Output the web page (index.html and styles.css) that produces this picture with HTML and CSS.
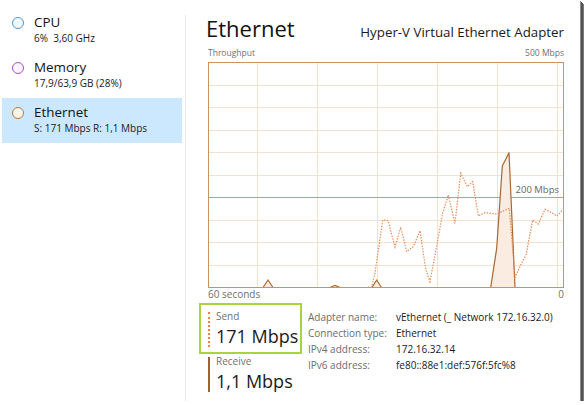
FILE: index.html
```html
<!DOCTYPE html>
<html lang="en">
<head>
<meta charset="utf-8">
<title>Task Manager - Ethernet</title>
<link rel="stylesheet" href="styles.css">
</head>
<body>
<div class="window">
  <aside class="sidebar">
    <div class="item">
      <span class="dot cpu"></span>
      <div class="txt"><div class="name">CPU</div><div class="sub">6%&nbsp; 3,60 GHz</div></div>
    </div>
    <div class="item">
      <span class="dot mem"></span>
      <div class="txt"><div class="name">Memory</div><div class="sub">17,9/63,9 GB (28%)</div></div>
    </div>
    <div class="item selected">
      <span class="dot eth"></span>
      <div class="txt"><div class="name">Ethernet</div><div class="sub">S: 171 Mbps R: 1,1 Mbps</div></div>
    </div>
  </aside>
  <div class="sep"></div>
  <main class="main">
    <div class="head">
      <h1>Ethernet</h1>
      <div class="adapter">Hyper-V Virtual Ethernet Adapter</div>
    </div>
    <div class="axis top"><span>Throughput</span><span>500 Mbps</span></div>
    <svg class="chart" viewBox="0 0 356 226" width="356" height="226">
      <rect x="0.5" y="0.5" width="355" height="225" fill="#fff"/>
      <g stroke="#f4e2cf" stroke-width="1">
        <line x1="0" y1="23.5" x2="356" y2="23.5"/>
        <line x1="0" y1="45.5" x2="356" y2="45.5"/>
        <line x1="0" y1="68.5" x2="356" y2="68.5"/>
        <line x1="0" y1="90.5" x2="356" y2="90.5"/>
        <line x1="0" y1="113.5" x2="356" y2="113.5"/>
        <line x1="0" y1="158.5" x2="356" y2="158.5"/>
        <line x1="0" y1="180.5" x2="356" y2="180.5"/>
        <line x1="0" y1="203.5" x2="356" y2="203.5"/>
        <line x1="49.5" y1="0" x2="49.5" y2="226"/>
        <line x1="109.5" y1="0" x2="109.5" y2="226"/>
        <line x1="169.5" y1="0" x2="169.5" y2="226"/>
        <line x1="229.5" y1="0" x2="229.5" y2="226"/>
        <line x1="289.5" y1="0" x2="289.5" y2="226"/>
        <line x1="349.5" y1="0" x2="349.5" y2="226"/>
      </g>
      <line x1="0" y1="135.5" x2="356" y2="135.5" stroke="#cc9d6d" stroke-width="1"/>
      <text x="351" y="130.5" text-anchor="end" class="chart-label">200 Mbps</text>
      <polygon points="282.7,225.5 288.7,186.3 294.3,104 301,90.7 307,225.5" fill="#faece0" stroke="#a8672e" stroke-width="1.2" stroke-linejoin="round"/>
      <polyline points="55,225.5 60,218 65,225.5" fill="#faece0" stroke="#a8672e" stroke-width="1.2"/>
      <polyline points="122,225.5 127,223.5 132,225.5" fill="none" stroke="#a8672e" stroke-width="1.2"/>
      <polyline points="164,225.5 168.7,218 173.5,225.5" fill="#faece0" stroke="#a8672e" stroke-width="1.2"/>
      <polyline points="160,225 163.7,225 167,211 174.7,158 180,158.7 187,185 192.7,165.3 198.7,189.7 205.3,184.7 212,168.7 217.7,207 222,219.7 229.3,180.7 234.7,151 240.3,133 247,161.3 252.7,111.3 259.3,124.7 264.7,119.7 270.3,154 277,150.7 288.7,152 301.3,146.3 307,215.3 312.7,203 318,193 324.7,158 330.3,162 337,147.3 343.7,150.7 348.7,154 353.7,149 355.5,148" fill="none" stroke="#e4884e" stroke-width="1.2" stroke-dasharray="1.4 1.4"/>
      <rect x="0.5" y="0.5" width="355" height="225" fill="none" stroke="#c8955f" stroke-width="1"/>
    </svg>
    <div class="axis bottom"><span>60 seconds</span><span>0</span></div>
    <div class="stats">
      <div class="meters">
        <div class="meter selected">
          <span class="bar dotted"></span>
          <div class="mtext"><div class="label">Send</div><div class="value">171 Mbps</div></div>
        </div>
        <div class="meter recv">
          <span class="bar solid"></span>
          <div class="mtext"><div class="label">Receive</div><div class="value">1,1 Mbps</div></div>
        </div>
      </div>
      <dl class="details">
        <dt>Adapter name:</dt><dd>vEthernet (_ Network 172.16.32.0)</dd>
        <dt>Connection type:</dt><dd>Ethernet</dd>
        <dt>IPv4 address:</dt><dd>172.16.32.14</dd>
        <dt>IPv6 address:</dt><dd>fe80::88e1:def:576f:5fc%8</dd>
      </dl>
    </div>
  </main>
</div>
</body>
</html>
```
FILE: styles.css
```css
html, body {
  margin: 0;
  padding: 0;
  background: #fff;
}
body {
  font-family: "Open Sans", "Noto Sans", sans-serif;
  color: #1a1a1a;
}
.window {
  width: 580px;
  height: 401px;
  display: flex;
  background: #fff;
  overflow: hidden;
  box-shadow: 1px 1px 0 #8e8e8e, 2px 2px 0 #505050, 3px 3px 0 #555, 4px 4px 0 #7a7a7a;
}
.sidebar {
  width: 185px;
  flex: none;
  padding-top: 8px;
  box-sizing: border-box;
}
.item {
  display: flex;
  align-items: flex-start;
  margin-left: 2px;
  width: 180px;
  height: 45px;
  box-sizing: border-box;
  padding: 4.5px 0 0 10px;
}
.item.selected {
  background: #cce8ff;
}
.dot {
  width: 12px;
  height: 12px;
  border-radius: 50%;
  border: 1.3px solid;
  box-sizing: border-box;
  margin-top: 4.5px;
  flex: none;
}
.dot.cpu { border-color: #4f97d2; background: #f3f8fd; }
.dot.mem { border-color: #ab4fc6; background: #fbf5fd; }
.dot.eth { border-color: #b9773a; background: #fdf4ec; }
.txt {
  margin-left: 10px;
}
.name {
  font-size: 13.4px;
  line-height: 18px;
  color: #111;
}
.sub {
  font-size: 10px;
  line-height: 14px;
  color: #1a1a1a;
}
.sep {
  width: 1px;
  flex: none;
  margin-top: 15px;
  background: #e6e6e6;
}
.main {
  flex: 1;
  min-width: 0;
  padding: 13px 16px 0 20px;
}
.head {
  display: flex;
  justify-content: space-between;
  align-items: baseline;
  height: 30px;
}
.head h1 {
  margin: 0;
  font-size: 22px;
  line-height: 30px;
  font-weight: normal;
  color: #111;
}
.adapter {
  font-size: 13.3px;
  line-height: 30px;
  color: #1a1a1a;
}
.axis {
  display: flex;
  justify-content: space-between;
  margin-left: 2px;
  color: #707070;
}
.axis.top {
  margin-top: 4px;
  font-size: 8.5px;
  line-height: 12px;
}
.axis.bottom {
  font-size: 10px;
  line-height: 13px;
}
.chart {
  display: block;
  margin: 3px 0 0 2px;
  width: 356px;
  height: 226px;
}
.chart-label {
  font-family: "Open Sans", "Noto Sans", sans-serif;
  font-size: 9.5px;
  fill: #666;
}
.stats {
  display: flex;
  align-items: flex-start;
  margin-top: 2px;
}
.meters {
  width: 103px;
  margin-left: -7px;
  flex: none;
}
.meter {
  display: flex;
  height: 51px;
  box-sizing: border-box;
  border: 2px solid transparent;
  padding: 5px 0 3px 7px;
}
.meter.selected {
  border-color: #a9d43c;
}
.meter.recv {
  margin-top: -6px;
}
.bar {
  width: 0;
  margin: 2px 0 2px 0;
  flex: none;
}
.bar.dotted {
  border-left: 2px dotted #e8874a;
}
.bar.solid {
  border-left: 2px solid #a4622b;
}
.mtext {
  margin-left: 6px;
}
.label {
  font-size: 10px;
  line-height: 13px;
  color: #707070;
}
.value {
  font-size: 18px;
  line-height: 26px;
  color: #1a1a1a;
  white-space: nowrap;
}
.details {
  display: grid;
  grid-template-columns: 88px auto;
  align-content: start;
  margin: 0 0 0 6px;
  padding-top: 6px;
  font-size: 10px;
  line-height: 16px;
}
.details dt {
  color: #6d6d6d;
}
.details dd {
  margin: 0;
  color: #1a1a1a;
  white-space: nowrap;
}
```
